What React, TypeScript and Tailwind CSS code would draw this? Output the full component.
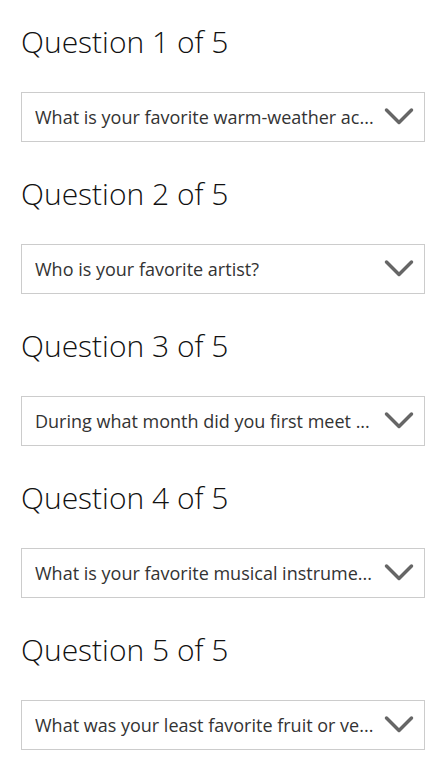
import React from 'react';

// labels as they appear in the closed selects
const questions = [
  'What is your favorite warm-weather ac...',
  'Who is your favorite artist?',
  'During what month did you first meet ...',
  'What is your favorite musical instrume...',
  'What was your least favorite fruit or ve...',
];

function Chevron() {
  return (
    <svg width="30" height="20" viewBox="0 0 30 20" className="shrink-0">
      <path d="M2.5 3 L15 15.5 L27.5 3" fill="none" stroke="#666666" strokeWidth="3.5" strokeLinecap="round" strokeLinejoin="round" />
    </svg>
  );
}

export default function App() {
  return (
    <div className="min-h-screen bg-white pl-[21px] pr-[10px] pt-[22px]" style={{ fontFamily: '"Open Sans", sans-serif' }}>
      <div className="flex flex-col gap-[32px]">
        {questions.map((q, i) => (
          <div key={i}>
            <h2 className="text-[30px] leading-[40px] font-light text-[#111]">
              Question {i + 1} of {questions.length}
            </h2>
            <div className="mt-[30px] h-[50px] border border-[#cccccc] flex items-center pl-[13px] pr-[10px] gap-[8px]">
              <span className="flex-1 min-w-0 whitespace-nowrap overflow-hidden text-[18px] text-[#333]">{q}</span>
              <Chevron />
            </div>
          </div>
        ))}
      </div>
    </div>
  );
}
